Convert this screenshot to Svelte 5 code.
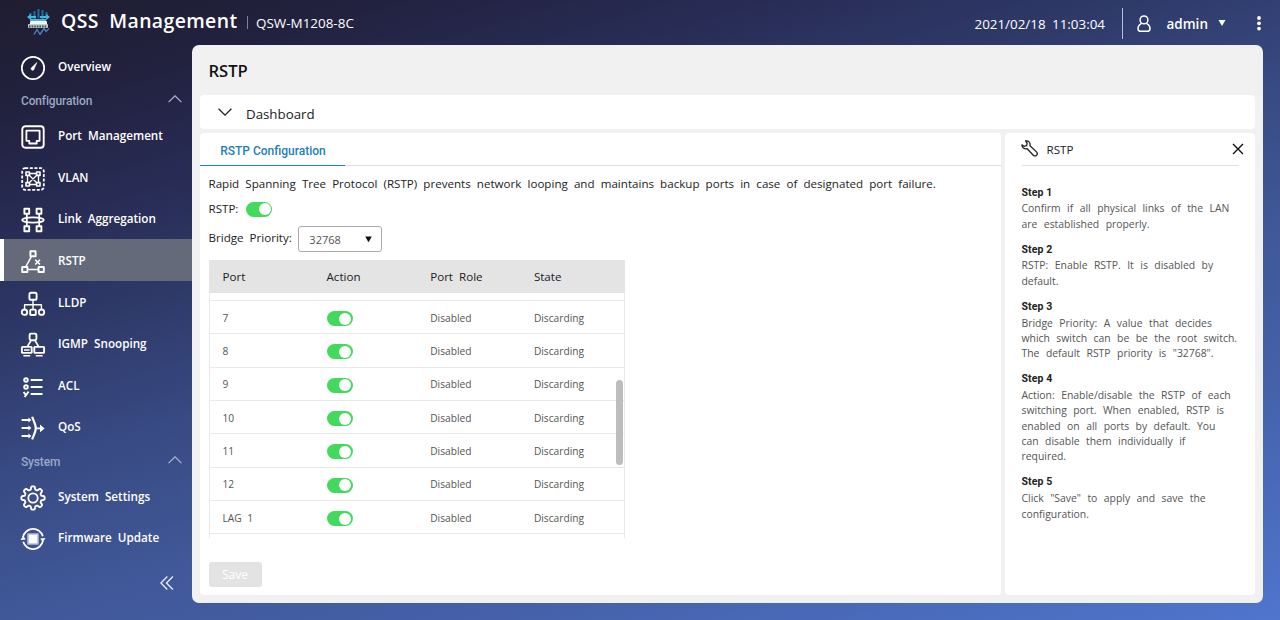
<script>
  const mainNav = [
    { icon: 'port', label: 'Port Management' },
    { icon: 'vlan', label: 'VLAN' },
    { icon: 'link', label: 'Link Aggregation' },
    { icon: 'rstp', label: 'RSTP', active: true },
    { icon: 'lldp', label: 'LLDP' },
    { icon: 'igmp', label: 'IGMP Snooping' },
    { icon: 'acl', label: 'ACL' },
    { icon: 'qos', label: 'QoS' }
  ];
  const systemNav = [
    { icon: 'gear', label: 'System Settings' },
    { icon: 'firmware', label: 'Firmware Update' }
  ];
  const steps = [
    ['Confirm if all physical links of the LAN', 'are established properly.'],
    ['RSTP: Enable RSTP. It is disabled by', 'default.'],
    ['Bridge Priority: A value that decides', 'which switch can be be the root switch.', 'The default RSTP priority is "32768".'],
    ['Action: Enable/disable the RSTP of each', 'switching port. When enabled, RSTP is', 'enabled on all ports by default. You', 'can disable them individually if', 'required.'],
    ['Click "Save" to apply and save the', 'configuration.']
  ];
  let rstp = $state(true);
  let ports = $state(['7', '8', '9', '10', '11', '12', 'LAG 1'].map((name) => ({ name, on: true })));

  // Outline of an eight-toothed cog centred on 12,12, with rounded teeth
  const cog = (() => {
    const pts = [];
    for (let i = 0; i <= 160; i++) {
      const a = (i / 160) * Math.PI * 2;
      const r = 10.1 + 1.6 * Math.tanh(2.2 * Math.cos(8 * a));
      pts.push((12 + r * Math.sin(a)).toFixed(2) + ' ' + (12 - r * Math.cos(a)).toFixed(2));
    }
    return 'M' + pts.join('L') + 'Z';
  })();
</script>

{#snippet icon(name)}
  <svg class="ico" viewBox="0 0 24 24" fill="none" stroke="#fff" stroke-width="1.6" stroke-linejoin="round">
    {#if name === 'overview'}
      <circle cx="12" cy="12" r="11.2" stroke-width="1.7" />
      <path d="M15.9 6.4 10.2 12a1.6 1.6 0 0 0 2.6 1.8z" fill="#fff" stroke-width=".5" />
    {:else if name === 'port'}
      <rect x="1.3" y="1.3" width="21.4" height="21.4" rx="3" stroke-width="1.9" />
      <path d="M5.4 5.6h13.2v10.2h-2.9v2.7H8.3v-2.7H5.4z" stroke-width="1.8" />
    {:else if name === 'vlan'}
      <rect x="1.2" y="1.2" width="21.6" height="21.6" rx="3" stroke-width="1.8" stroke-dasharray="3 1.6" />
      <path d="M8.5 6.5h7M8.5 17.5h7M6.5 8.5v7M17.5 8.5v7M8 8l8 8M16 8l-8 8" stroke-width="1.3" />
      <path d="M5 5h3.4v3.4H5zM15.6 5H19v3.4h-3.4zM5 15.6h3.4V19H5zM15.6 15.6H19V19h-3.4z" stroke-width="1.6" />
    {:else if name === 'link'}
      <path d="M3.4.8h4.8v5H3.4zM15.6.8h4.8v5h-4.8zM3.4 18.2h4.8v5H3.4zM15.6 18.2h4.8v5h-4.8z" stroke-width="1.9" />
      <path d="M5.8 6v12M18.2 6v12" stroke-width="1.8" />
      <ellipse cx="12" cy="12" rx="10.8" ry="2.7" stroke-width="1.8" />
    {:else if name === 'rstp'}
      <path d="M9.4 1.2h5.2v5H9.4zM1.2 17h5.2v5H1.2zM17.6 17h5.2v5h-5.2z" stroke-width="1.9" />
      <path d="M10.5 6.4 4.6 17M6.5 19.6h11" stroke-width="1.5" />
      <path d="m14.2 9.7 4.8 4.8M19 9.7l-4.8 4.8" />
    {:else if name === 'lldp'}
      <rect x="8.4" y=".8" width="7.2" height="7" rx="1.6" stroke-width="1.9" />
      <path d="M12 8v9M3.6 17.3v-4.6h16.8v4.6" stroke-width="1.4" />
      <rect x="9.2" y="17.6" width="5.6" height="5.4" rx=".8" stroke-width="1.9" />
      <circle cx="3.5" cy="20.2" r="2.7" stroke-width="1.9" /><circle cx="20.5" cy="20.2" r="2.7" stroke-width="1.9" />
    {:else if name === 'igmp'}
      <rect x="8.6" y=".6" width="6.8" height="6.6" rx="1.4" stroke-width="1.9" />
      <path d="m10 7.5-3.6 6M14 7.5l3.6 6" />
      <rect x=".9" y="13.9" width="9.8" height="6" rx=".6" stroke-width="1.9" /><rect x="13.3" y="13.9" width="9.8" height="6" rx=".6" stroke-width="1.9" />
      <path d="M3 17h5.6M2.4 22.7h6.8M14.8 22.7h6.8" />
    {:else if name === 'acl'}
      <circle cx="5" cy="5" r="1.8" stroke-width="1.9" /><circle cx="5" cy="12" r="1.8" stroke-width="1.9" />
      <path d="m2.6 17 2 2.6M7.6 16.6l-4 5.4" stroke-width="1.9" />
      <path d="M9.7 5h11.8M9.7 12h11.8M9.7 19h11.8" stroke-width="2" />
    {:else if name === 'qos'}
      <path d="M.6 4h8M.6 12h8M.6 20h8M14.4 12.4H22" stroke-width="1.8" />
      <path d="m7.4 1.6 3 2.4-3 2.4zM7.4 9.6l3 2.4-3 2.4zM7.4 17.600l3 2.400-3 2.400zM19 8.600l4.600 3.800-4.600 3.800z" fill="#fff" stroke="none" />
      <path d="M11.2.8c.8 3 3.6 7.4 3.6 11.4S12 20.4 11.2 23.4" stroke-width="2.2" />
    {:else if name === 'gear'}
      <path d={cog} stroke-width="1.9" />
      <circle cx="12" cy="12" r="4.7" stroke-width="1.8" />
    {:else if name === 'firmware'}
      <path d="M2 10.3A10.2 10.2 0 0 1 21.8 9.2M22 13.7A10.2 10.2 0 0 1 2.2 14.8" stroke-width="1.8" />
      <path d="m-.6 13 5.4-.6-2.5-3.4zM24.6 11l-5.4.6 2.5 3.4z" fill="#fff" stroke="none" />
      <rect x="7" y="7" width="10" height="10" fill="#fff" stroke="#b3bdd9" stroke-width="1.6" />
    {/if}
  </svg>
{/snippet}

{#snippet navItem(item)}
  <a class="item" class:active={item.active} href="#{item.icon}">{@render icon(item.icon)}<span>{item.label}</span></a>
{/snippet}

{#snippet section(label)}
  <div class="section">
    <span>{label}</span>
    <svg width="14" height="8" viewBox="0 0 14 8" fill="none" stroke="#a9b6d2" stroke-width="1.2"><path d="M.6 7.2 7 .8l6.4 6.4" /></svg>
  </div>
{/snippet}

<div class="app">
  <header>
    <svg class="logo" width="25" height="27" viewBox="0 0 25 27" fill="none">
      <path d="M4.500 5v6M8.500 3v8M12.500 1v9M16.500 2v9M20.500 4v6" stroke="#1c6f9e" stroke-width="2" />
      <path d="M2 9h8M14 9h9M4 12h16" stroke="#3fb9e0" stroke-width="1.800" />
      <path d="m5 6.500-3 2.500 3 2.500M20 6.500l3 2.500-3 2.500" stroke="#3fb9e0" stroke-width="1.200" />
      <rect x="4" y="13" width="17" height="4" rx="1" fill="#f4f5f0" /><rect x="2" y="16" width="20" height="4" rx="1" fill="#c3ced0" />
      <path d="M3 18.500h18" stroke="#38505e" stroke-width="1.800" stroke-dasharray="1.600 1" />
      <path d="m8 26.500 3-5 3 5 4-6 2 3 3-3" stroke="#4b80b8" stroke-width="1.400" />
    </svg>
    <h1>QSS Management</h1>
    <i class="bar"></i>
    <span class="model">QSW-M1208-8C</span>
    <span class="clock">2021/02/18 11:03:04</span>
    <i class="rule"></i>
    <svg class="user" width="14" height="18" viewBox="0 0 14 18" fill="none" stroke="#fff" stroke-width="1.5">
      <circle cx="7" cy="4.9" r="3.9" />
      <path d="M4.500 8.300C2.200 9.500 1 11.500 1 13.700c0 2 1.300 2.600 3 2.600h6c1.700 0 3-.6 3-2.600 0-2.200-1.200-4.200-3.500-5.400" />
    </svg>
    <span class="admin">admin</span>
    <svg class="caret" width="8" height="6" viewBox="0 0 8 6"><path d="M.5 0h7L4 6z" fill="#fff" /></svg>
    <svg class="dots" width="4" height="15" viewBox="0 0 4 15" fill="#fff"><circle cx="2" cy="2" r="1.9" /><circle cx="2" cy="7.300" r="1.9" /><circle cx="2" cy="12.600" r="1.9" /></svg>
  </header>

  <div class="body">
    <nav>
      {@render navItem({ icon: 'overview', label: 'Overview' })}
      {@render section('Configuration')}
      {#each mainNav as item}{@render navItem(item)}{/each}
      {@render section('System')}
      {#each systemNav as item}{@render navItem(item)}{/each}
      <svg class="collapse" width="14" height="14" viewBox="0 0 14 14" fill="none" stroke="#e4eaf8" stroke-width="1.4"><path d="M7.300.6.900 7l6.400 6.400M12.900.6 6.500 7l6.400 6.400" /></svg>
    </nav>

    <main>
      <h2>RSTP</h2>
      <div class="card dash">
        <svg width="14" height="8" viewBox="0 0 14 8" fill="none" stroke="#222" stroke-width="1.3"><path d="M.6.7 7 7.1 13.400.7" /></svg>
        <span>Dashboard</span>
      </div>
      <div class="columns">
        <section class="card config">
          <div class="tabs"><span class="tab">RSTP Configuration</span></div>
          <div class="content">
            <p class="intro">Rapid Spanning Tree Protocol (RSTP) prevents network looping and maintains backup ports in case of designated port failure.</p>
            <div class="field"><span class="lbl">RSTP:</span><button class="toggle" class:on={rstp} onclick={() => (rstp = !rstp)} aria-label="RSTP"></button></div>
            <div class="field priority">
              <span class="lbl">Bridge Priority:</span>
              <div class="select"><span>32768</span><svg width="7" height="7" viewBox="0 0 7 7"><path d="M.2.500h6.600L3.500 6.300z" fill="#111" /></svg></div>
            </div>
            <div class="table">
              <div class="tr th"><span>Port</span><span>Action</span><span>Port Role</span><span>State</span></div>
              <div class="rows">
                {#each ports as port}
                  <div class="tr">
                    <span>{port.name}</span>
                    <span class="cell"><button class="toggle" class:on={port.on} onclick={() => (port.on = !port.on)} aria-label={port.name}></button></span>
                    <span>Disabled</span><span>Discarding</span>
                  </div>
                {/each}
                <i class="thumb"></i>
              </div>
            </div>
            <button class="save" disabled>Save</button>
          </div>
        </section>

        <aside class="card help">
          <div class="help-head">
            <svg width="17" height="17" viewBox="0 0 17 17" fill="none" stroke="#222" stroke-width="1.3" stroke-linejoin="round">
              <path d="M4.600.9C7.400.3 9.600 2.600 9 5.800L15.500 11.900C16.500 12.900 16.500 14.300 15.600 15.300 14.700 16.200 13.300 16.200 12.300 15.200L6.200 8.700C3.400 9.400.8 7.600.9 4.900L3 6.300 5.500 5.700 6.200 3.300Z" />
            </svg>
            <span>RSTP</span>
            <svg class="close" width="12" height="12" viewBox="0 0 12 12" stroke="#111" stroke-width="1.4"><path d="m1 1 10 10M11 1 1 11" /></svg>
          </div>
          {#each steps as lines, i}
            <div class="step">
              <h3>Step {i + 1}</h3>
              {#each lines as line}<p>{line}</p>{/each}
            </div>
          {/each}
        </aside>
      </div>
    </main>
  </div>
</div>

<style>
  :global(body) { margin: 0; }
  * { box-sizing: border-box; }
  h1, h2, h3, p { margin: 0; }
  button { border: 0; padding: 0; font: inherit; }
  .app {
    width: 1280px; height: 620px; overflow: hidden; display: flex; flex-direction: column;
    font-family: "Open Sans", "Noto Sans", sans-serif; color: #222;
    background: linear-gradient(163deg, #1e1d30 0%, #222240 12%, #282c55 23%, #2e3968 34%, #384a83 47%, #405898 61%, #4560a8 75%, #4f75cd 100%);
  }
  header { height: 45px; flex: none; display: flex; align-items: center; color: #fff; padding-left: 26px; }
  .logo { margin-top: -3px; }
  h1 { font-size: 19.4px; font-weight: 600; line-height: 26px; margin: -3px 0 0 10px; width: 176px; white-space: nowrap; letter-spacing: .4px; word-spacing: 5px; }
  .bar { width: 1px; height: 13px; background: #7d8299; margin: -1px 0 0 10px; }
  .model { font-size: 13.45px; margin: 1px 0 0 8px; white-space: nowrap; }
  .clock { font-size: 13.4px; margin: 2px 0 0 auto; white-space: nowrap; word-spacing: 3px; }
  .rule { width: 1px; height: 31px; background: #b5bdd8; margin: 2px 0 0 17px; }
  .user { margin: 2px 0 0 14px; }
  .admin { font-size: 13.5px; font-weight: 600; margin: 3px 0 0 15.5px; width: 41.5px; }
  .caret { margin: 1px 0 0 10px; }
  .dots { margin: 2px 19px 0 31px; }

  .body { display: flex; flex: 1; }
  nav { width: 192px; flex: none; display: flex; flex-direction: column; }
  .item {
    height: 41.67px; flex: none; display: flex; align-items: center; gap: 13px; padding: 2.6px 0 0 21px;
    color: #fff; text-decoration: none; font-size: 11.7px; font-weight: 600; word-spacing: 3px; white-space: nowrap;
  }
  .item span { position: relative; top: -1.5px; }
  .item.active { background: #646a7a; border-left: 4px solid #fff; padding-left: 17px; }
  .ico { width: 24px; height: 24px; overflow: visible; flex: none; margin-top: 1px; }
  .section {
    height: 27.6px; flex: none; display: flex; justify-content: space-between; padding: 7px 10px 0 21px;
    font: 500 12px/15px Roboto, sans-serif; letter-spacing: -.15px; color: #99a9c5;
  }
  .section svg { margin-top: 1px; }
  .collapse { margin: 18px 0 0 160px; }

  main { width: 1071px; height: 558px; background: #f1f1f1; border-radius: 7px; padding: 0 8px 8px; display: flex; flex-direction: column; }
  h2 { height: 50px; line-height: 52px; font-size: 16.6px; font-weight: 600; padding-left: 8.5px; color: #111; flex: none; }
  .card { background: #fff; border-radius: 4px; }
  .dash { height: 34px; flex: none; display: flex; align-items: center; gap: 14px; padding: 4px 0 0 18px; font-size: 13.3px; }
  .dash svg { margin-top: -5px; }
  .columns { flex: 1; display: flex; gap: 4px; margin-top: 4px; }
  .config { width: 801px; }
  .tabs { height: 33px; border-bottom: 1px solid #ddd; display: flex; }
  .tab { width: 145px; height: 33px; padding-left: 1px; border-bottom: 1.5px solid #2380b8; color: #2380b8; text-align: center; font: 500 12px/37px Roboto, sans-serif; }
  .content { padding: 8px 0 0 8.5px; }
  .intro { font-size: 11.6px; line-height: 20px; white-space: nowrap; word-spacing: 3.1px; }
  .field { display: flex; align-items: center; font-size: 11.6px; height: 30px; word-spacing: 3px; }
  .field .lbl { margin-right: 8px; position: relative; top: -.5px; }
  .priority { height: 27px; }
  .priority .lbl { margin-right: 6.5px; }
  .select { width: 84px; height: 26px; border: 1px solid #aaa; border-radius: 3px; display: flex; align-items: center; justify-content: space-between; padding: 0 9px 0 10px; font-size: 11px; color: #555; margin-top: 3px; }
  .toggle { display: block; width: 26px; height: 15px; border-radius: 8px; background: #bbb; padding: 1.5px; }
  .toggle::after { content: ''; display: block; width: 12px; height: 12px; border-radius: 50%; background: #fff; }
  .toggle.on { background: #43d95c; }
  .toggle.on::after { margin-left: auto; }

  .table { width: 416.5px; margin-top: 9px; }
  .tr { display: grid; grid-template-columns: 104px 103.7px 103.7px 1fr; align-items: center; padding-left: 14px; height: 33.33px; border-bottom: 1px solid #eaeaea; font-size: 10.2px; color: #555; word-spacing: 3px; }
  .th { height: 33px; background: #e4e4e4; font-size: 11.6px; color: #222; border: 0; }
  .cell { padding: 2px 0 0 .3px; }
  .rows { position: relative; height: 245px; padding-top: 8px; overflow: hidden; border: solid #eaeaea; border-width: 0 1px; }
  .rows .tr { padding: 1px 0 0 13px; }
  .rows .tr:first-child { box-shadow: 0 -1px #eaeaea; }
  .thumb { position: absolute; right: 1px; top: 87px; width: 7px; height: 85px; border-radius: 4px; background: #bdbdbd; }
  .save { display: block; margin-top: 24px; width: 53px; height: 25px; border-radius: 3px; background: #e3e3e3; color: #fff; font-size: 12px; }

  .help { width: 250px; padding: 0 16px 0 16.5px; }
  .help-head { height: 33px; border-bottom: 1px solid #e2e2e2; display: flex; align-items: center; font-size: 11.6px; margin-bottom: 18.5px; }
  .help-head svg:first-child { margin: -2px 0 0 -1px; }
  .help-head span { margin-left: 9px; }
  .help-head .close { margin-left: auto; margin-right: -5px; }
  .step { margin-bottom: 9.8px; }
  h3 { font: 700 10.5px/16px Roboto, sans-serif; letter-spacing: .1px; margin-bottom: .8px; color: #222; }
  .step p { font-size: 10.4px; line-height: 15.3px; white-space: nowrap; word-spacing: 3.75px; color: #555; }
</style>
